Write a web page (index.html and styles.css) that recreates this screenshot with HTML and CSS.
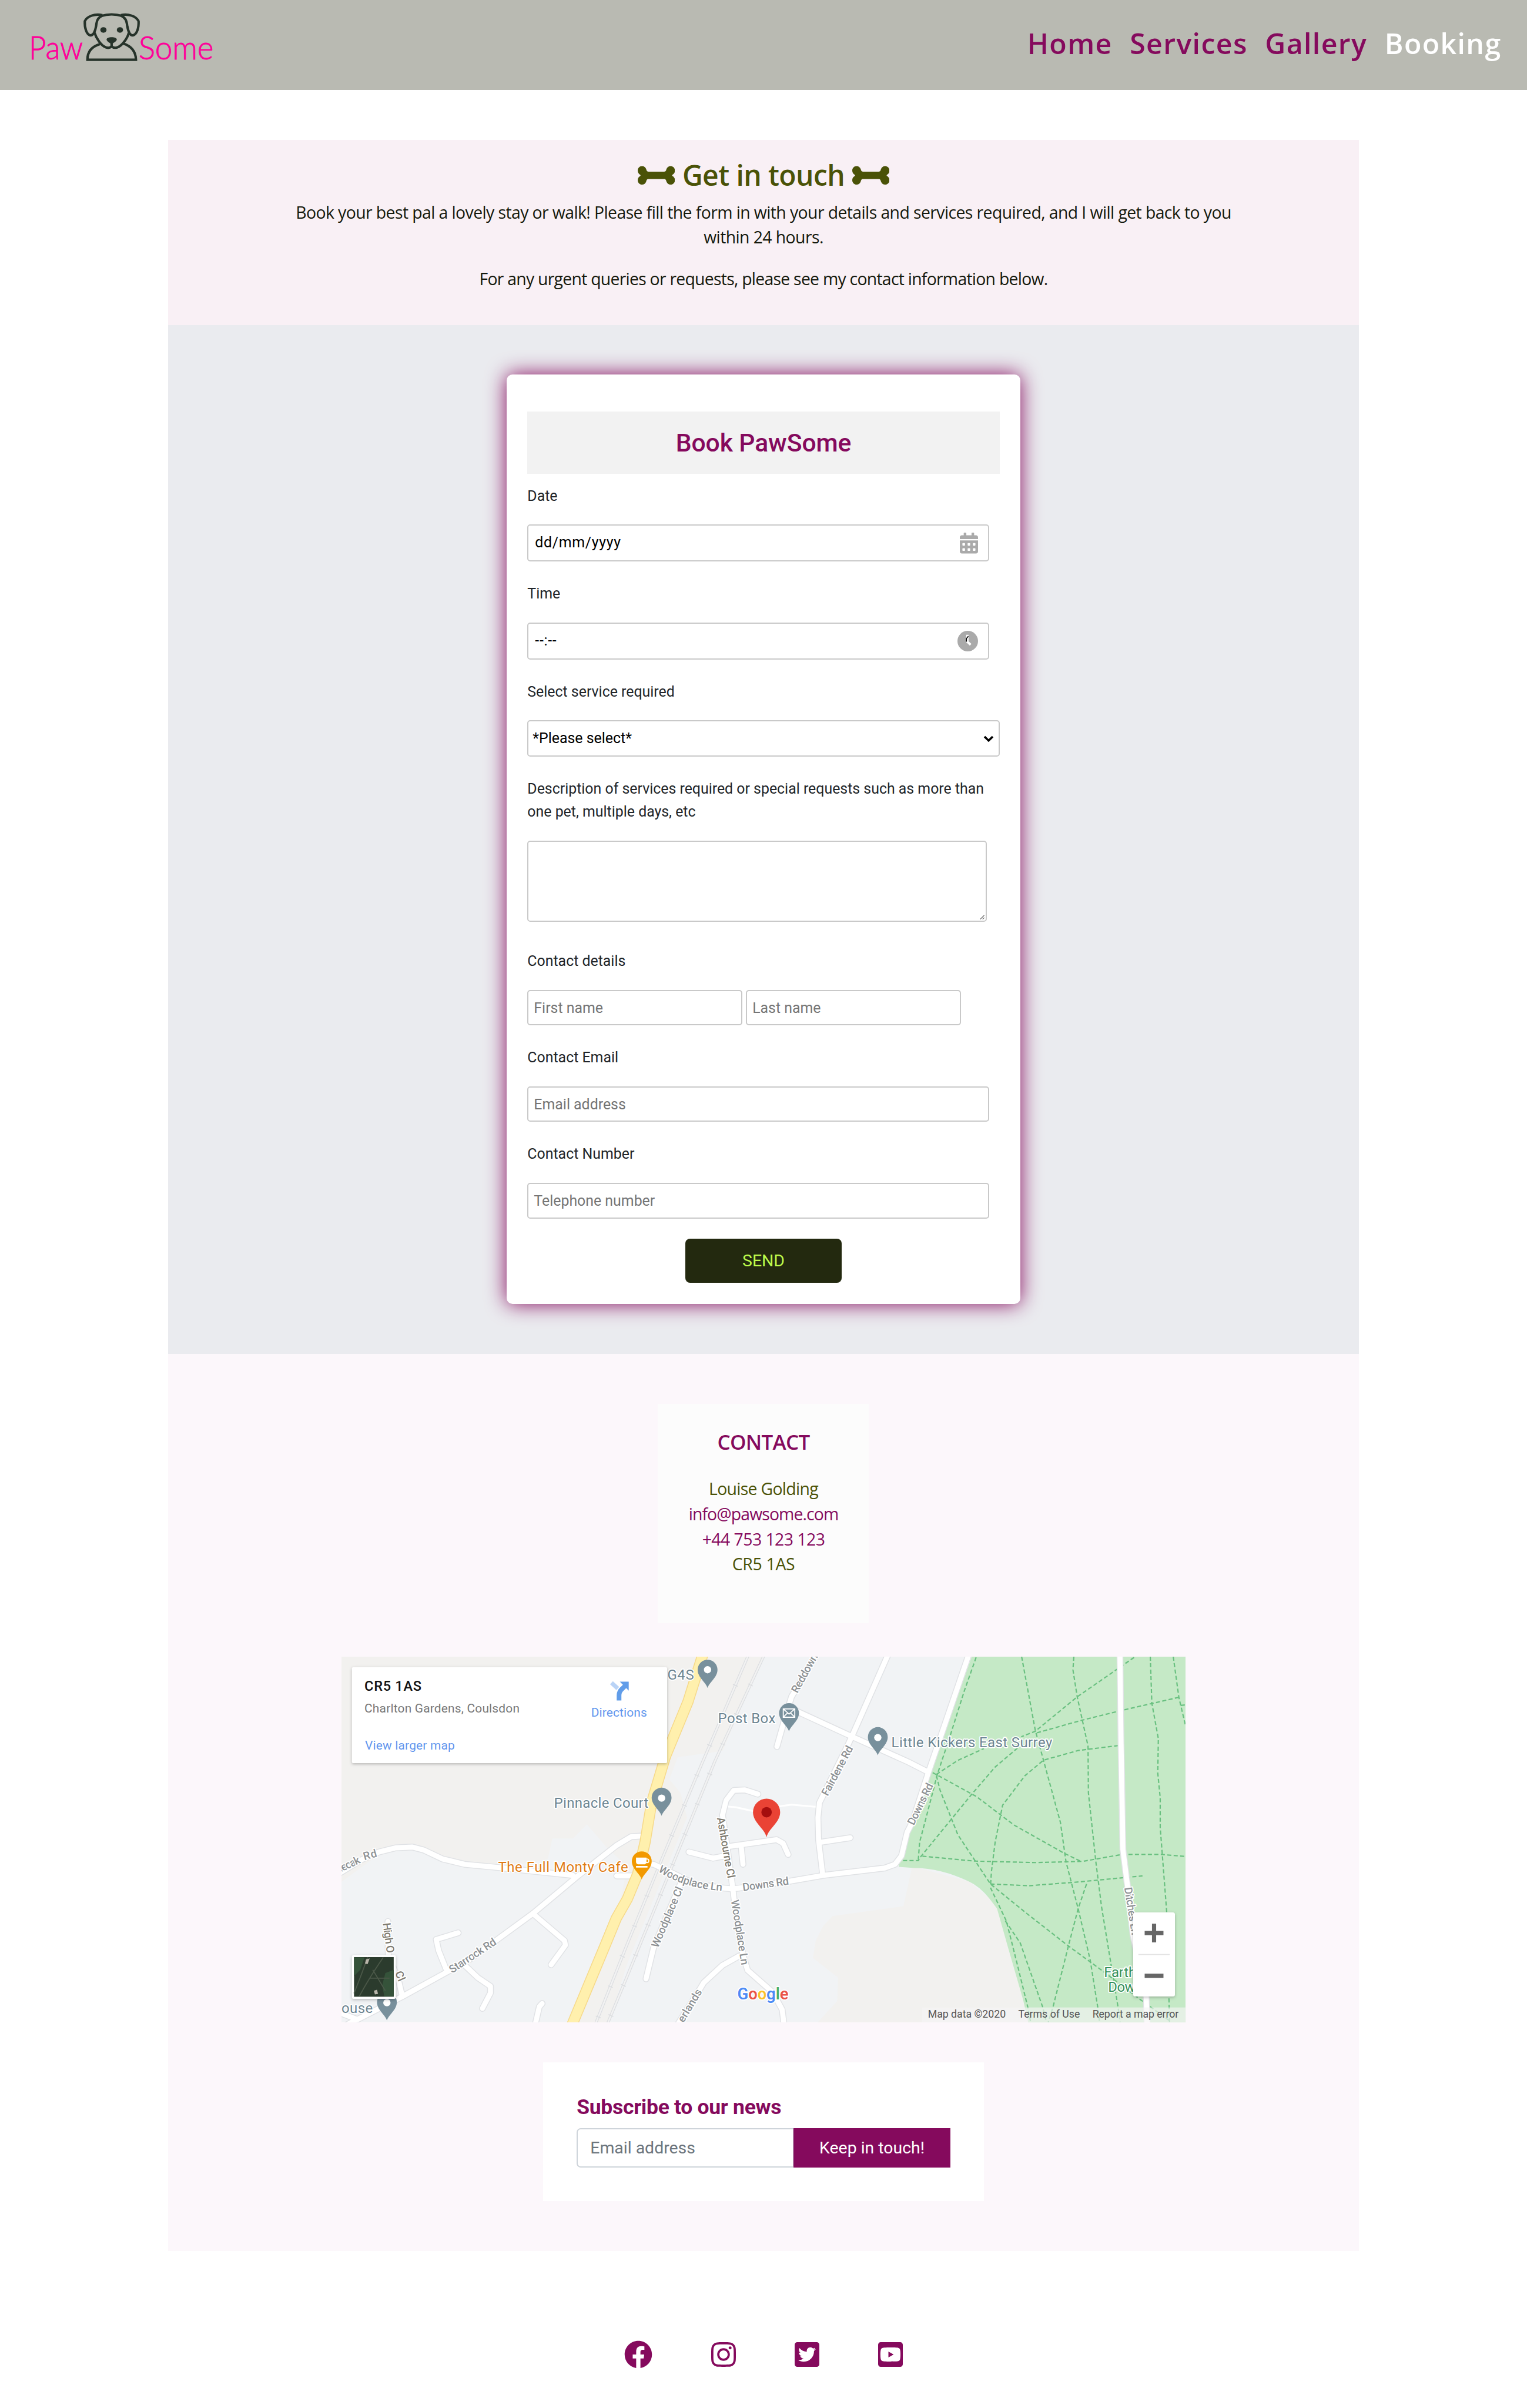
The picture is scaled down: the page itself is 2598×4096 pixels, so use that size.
FILE: index.html
```html
<!DOCTYPE html>
<html lang="en">
<head>
<meta charset="utf-8">
<title>PawSome - Booking</title>
<link rel="stylesheet" href="styles.css">
</head>
<body>
<header class="site-header">
  <svg class="logo" viewBox="0 0 1500 516" role="img" aria-label="PawSome">
    <text class="logo-text" x="165" y="340" textLength="311" lengthAdjust="spacingAndGlyphs">Paw</text>
    <g class="dog-line">
      <path d="M580 92C620 80 662 80 703 92"/>
      <path d="M588 87C545 78 500 92 487 122C485 160 497 198 518 203C535 206 547 180 552 150C556 115 562 103 586 90"/>
      <path d="M694 87C737 78 782 92 796 122C798 160 786 198 764 203C747 206 736 180 731 150C727 115 720 103 696 90"/>
      <path d="M543 188C553 222 582 264 610 273C625 277 636 272 641 266C648 273 660 277 675 272C702 262 732 220 740 188"/>
      <path d="M574 253C530 266 502 296 502 343H781C780 300 756 266 708 250"/>
    </g>
    <g class="dog-solid">
      <ellipse cx="594" cy="172" rx="18" ry="16"/>
      <ellipse cx="689" cy="172" rx="18" ry="16"/>
      <path d="M612 226C614 209 669 209 671 226C670 238 655 243 648 250V268H634V250C627 243 613 238 612 226Z"/>
    </g>
    <text class="logo-text" x="796" y="340" textLength="431" lengthAdjust="spacingAndGlyphs">Some</text>
  </svg>
  <nav class="site-nav">
    <a>Home</a>
    <a>Services</a>
    <a>Gallery</a>
    <a class="active">Booking</a>
  </nav>
</header>

<main class="container">
  <section class="intro">
    <h2 class="intro-title">
      <svg class="bone" viewBox="0 0 640 512"><path d="M598.88 244.56c25.2-12.6 41.12-38.36 41.12-66.53v-7.64C640 129.3 606.7 96 565.61 96c-32.02 0-60.44 20.49-70.57 50.86-7.68 23.03-11.6 45.14-38.11 45.14H183.06c-27.38 0-31.58-25.54-38.11-45.14C134.83 116.49 106.4 96 74.39 96 33.3 96 0 129.3 0 170.39v7.64c0 28.17 15.92 53.93 41.12 66.53 9.43 4.71 9.43 18.17 0 22.88C15.92 280.04 0 305.8 0 333.97v7.64C0 382.7 33.3 416 74.38 416c32.02 0 60.44-20.49 70.57-50.86 7.68-23.03 11.6-45.14 38.11-45.14h273.87c27.38 0 31.58 25.54 38.11 45.14C505.17 395.51 533.6 416 565.61 416c41.08 0 74.38-33.3 74.38-74.39v-7.64c0-28.18-15.92-53.93-41.12-66.53-9.42-4.71-9.42-18.17.01-22.88z"/></svg>
      <span>Get in touch</span>
      <svg class="bone" viewBox="0 0 640 512"><path d="M598.88 244.56c25.2-12.6 41.12-38.36 41.12-66.53v-7.64C640 129.3 606.7 96 565.61 96c-32.02 0-60.44 20.49-70.57 50.86-7.68 23.03-11.6 45.14-38.11 45.14H183.06c-27.38 0-31.58-25.54-38.11-45.14C134.83 116.49 106.4 96 74.39 96 33.3 96 0 129.3 0 170.39v7.64c0 28.17 15.92 53.93 41.12 66.53 9.43 4.71 9.43 18.17 0 22.88C15.92 280.04 0 305.8 0 333.97v7.64C0 382.7 33.3 416 74.38 416c32.02 0 60.44-20.49 70.57-50.86 7.68-23.03 11.6-45.14 38.11-45.14h273.87c27.38 0 31.58 25.54 38.11 45.14C505.17 395.51 533.6 416 565.61 416c41.08 0 74.38-33.3 74.38-74.39v-7.64c0-28.18-15.92-53.93-41.12-66.53-9.42-4.71-9.42-18.17.01-22.88z"/></svg>
    </h2>
    <p class="intro-text">Book your best pal a lovely stay or walk! Please fill the form in with your details and services required, and I will get back to you within 24 hours.</p>
    <p class="intro-text intro-note">For any urgent queries or requests, please see my contact information below.</p>
  </section>

  <section class="booking">
    <form class="booking-card">
      <h3 class="booking-title">Book PawSome</h3>

      <label class="field-label">Date</label>
      <div class="control control-tall">
        <span class="control-value date-value">dd/mm/yyyy</span>
        <svg class="calendar" viewBox="0 0 448 512"><path d="M0 464c0 26.5 21.5 48 48 48h352c26.5 0 48-21.5 48-48V192H0v272zm320-196c0-6.6 5.4-12 12-12h40c6.6 0 12 5.4 12 12v40c0 6.6-5.4 12-12 12h-40c-6.6 0-12-5.4-12-12v-40zm0 128c0-6.6 5.4-12 12-12h40c6.6 0 12 5.4 12 12v40c0 6.6-5.4 12-12 12h-40c-6.6 0-12-5.4-12-12v-40zM192 268c0-6.6 5.4-12 12-12h40c6.6 0 12 5.4 12 12v40c0 6.6-5.4 12-12 12h-40c-6.6 0-12-5.4-12-12v-40zm0 128c0-6.6 5.4-12 12-12h40c6.6 0 12 5.4 12 12v40c0 6.6-5.4 12-12 12h-40c-6.6 0-12-5.4-12-12v-40zM64 268c0-6.6 5.4-12 12-12h40c6.6 0 12 5.4 12 12v40c0 6.6-5.4 12-12 12H76c-6.6 0-12-5.4-12-12v-40zm0 128c0-6.6 5.4-12 12-12h40c6.6 0 12 5.4 12 12v40c0 6.6-5.4 12-12 12H76c-6.6 0-12-5.4-12-12v-40zM400 64h-48V16c0-8.8-7.2-16-16-16h-32c-8.8 0-16 7.2-16 16v48H160V16c0-8.8-7.2-16-16-16h-32c-8.8 0-16 7.2-16 16v48H48C21.5 64 0 85.5 0 112v48h448v-48c0-26.5-21.5-48-48-48z"/></svg>
      </div>

      <label class="field-label">Time</label>
      <div class="control control-tall">
        <span class="control-value date-value">--:--</span>
        <svg class="clock" viewBox="0 0 36 36">
          <circle class="clock-face" cx="18" cy="18" r="18"/>
          <path class="clock-hand" d="M17.4 7V19.2L23 24.4"/>
          <path class="clock-mark" d="M15.800 19V13.500L19 9.500"/>
        </svg>
      </div>

      <label class="field-label">Select service required</label>
      <div class="control control-select">
        <span class="control-value">*Please select*</span>
        <svg class="chevron" viewBox="0 0 18 11"><path d="M2 2L9 8.7L16 2"/></svg>
      </div>

      <label class="field-label">Description of services required or special requests such as more than one pet, multiple days, etc</label>
      <div class="control control-area">
        <svg class="grip" viewBox="0 0 10 10"><path d="M1 9.500L9.500 1M6 9.500L9.500 6"/></svg>
      </div>

      <label class="field-label field-label-far">Contact details</label>
      <div class="name-row">
        <input class="control control-name" placeholder="First name">
        <input class="control control-name" placeholder="Last name">
      </div>

      <label class="field-label">Contact Email</label>
      <input class="control control-short" placeholder="Email address">

      <label class="field-label">Contact Number</label>
      <input class="control control-short" placeholder="Telephone number">

      <button class="send" type="button">SEND</button>
    </form>
  </section>

  <section class="contact">
    <div class="contact-card">
      <h4 class="contact-title">CONTACT</h4>
      <span>Louise Golding</span>
      <a class="contact-link mail">info@pawsome.com</a>
      <a class="contact-link phone">+44 753 123 123</a>
      <span class="postcode">CR5 1AS</span>
    </div>

    <svg class="map" viewBox="0 0 1616 700" preserveAspectRatio="none">
      <defs>
        <path id="pin" d="M0 0C-3 -11 -19 -20 -19 -35A19 19 0 0 1 19 -35C19 -20 3 -11 0 0Z"/>
        <g id="roads" class="roads">
          <g transform="translate(-1512 0)">
            <path d="M20 930L150 870L240 840L330 823L420 820L480 832L580 868L700 890L880 903L1280 935"/>
            <path d="M20 1490L125 1520L370 1425L610 1325L700 1290L830 1220L1065 1090L1310 935L1511 815L1592 778L1650 775"/>
            <path d="M110 1524L60 1545"/>
            <path d="M600 1315L560 1240L547 1195L665 1168"/>
            <path d="M700 1300L770 1350L838 1385L838 1412L795 1475"/>
            <path d="M1065 1090L1235 1200L1240 1218L1163 1298"/>
            <path d="M1078 1540L1100 1468L1115 1455"/>
            <path d="M362 1415L345 1360L290 1260L288 1122"/>
            <path d="M1515 937L1600 937"/>
          </g>
          <path d="M150 885L200 890L300 925L420 970L560 985L625 990L920 960L1110 935L1440 905L1495 890L1530 855L1560 760L1587 720L1677 510L1890 40"/>
          <path d="M760 605L690 588L630 590L590 630L570 690L600 850L625 985L640 1080L680 1260L705 1320L840 1410L890 1480L900 1540"/>
          <path d="M600 818L860 790L895 805L922 850"/>
          <path d="M670 815L680 890"/>
          <path d="M390 840L520 865L590 855"/>
          <path d="M1460 35L1270 360L1240 410L1090 640L1082 700L1085 790L1107 930"/>
          <path d="M1100 800L1255 782"/>
          <path d="M950 262L1260 370L1568 475L1672 515"/>
          <path d="M1080 30L940 210L900 310L862 412"/>
          <path d="M350 960L200 1230L160 1355"/>
          <path d="M660 1262L570 1300L470 1370L430 1420L330 1540"/>
          <path d="M2701 35L2707 400L2717 830L2742 980L2772 1180L2842 1430L2847 1540"/>
        </g>
      </defs>

      <rect class="land" width="1616" height="700"/>
      <g class="map-lines" transform="translate(-14 -22.2) scale(.35714 .47192) translate(1512 0)">
        <path class="land-warm" d="M-1480 40L790 40L570 430L330 455L285 545L345 600L380 700L56 1300L-42 1540L-260 1540L0 1120L60 900L-52 820L-157 728L-232 785L-342 785L-367 870L-632 905L-812 885L-1142 812L-1272 850L-1480 965Z"/>
        <path class="land-warm" d="M1587 900L1622 905L1892 960L2002 1030L2042 1070L2102 1230L2182 1440L2215 1540L1070 1540L1185 1445L1190 1350L1055 1270L1070 1200L1110 1140L1160 1100L1540 1060Z"/>
        <path class="park" d="M1910 40H3060V1540H2212L2182 1440L2102 1230L2042 1070L2002 1030Q1950 980 1892 960Q1740 905 1600 905L1515 900L1530 850L1575 750L1687 510Z"/>
        <g class="rail">
          <path d="M709 40L460 480L250 860L56 1220L-112 1540"/>
          <path d="M794 40L530 470L56 1350L-48 1540"/>
        </g>
        <g class="rail-core">
          <path d="M709 40L460 480L250 860L56 1220L-112 1540"/>
          <path d="M794 40L530 470L56 1350L-48 1540"/>
        </g>
        <g class="rail-ties">
          <path d="M709 40L460 480L250 860L56 1220L-112 1540"/>
          <path d="M794 40L530 470L56 1350L-48 1540"/>
        </g>
        <g class="trails" transform="translate(1512 0)">
          <path d="M418 50L355 185L280 365L210 525L150 700L115 800L108 870"/>
          <path d="M662 47L735 345L780 470L870 720L900 880L965 1070L1030 1280L1070 1470L1080 1530"/>
          <path d="M942 47L937 100L960 210L1018 410L1020 600L1060 880L1090 1060L1140 1290L1180 1475L1190 1530"/>
          <path d="M1265 50L960 210L735 350L660 372"/>
          <path d="M1505 212L1200 265L985 305L735 358"/>
          <path d="M1180 408L965 428L780 467L680 530L560 650L520 800L500 920L495 980"/>
          <path d="M205 525L320 468L460 420"/>
          <path d="M640 418L520 495L395 605L120 860L108 875L20 875"/>
          <path d="M185 518L215 530L420 615L620 730L890 845L985 880"/>
          <path d="M205 530L225 590L320 770L495 970L690 1090L910 1220L1100 1325L1300 1440L1455 1525"/>
          <path d="M130 857L410 877L740 883L990 878L1200 850L1410 850L1540 858"/>
          <path d="M495 970L700 977L960 962L1310 937"/>
          <path d="M1010 970L965 1070L915 1215L830 1470L805 1530"/>
          <path d="M495 985L580 1120L640 1300L695 1470L710 1530"/>
          <path d="M575 1120L655 1210L775 1470L795 1530"/>
          <path d="M1352 47L1360 235L1395 380L1392 520L1405 620L1405 740L1440 1085L1455 1530"/>
          <path d="M1475 47L1505 212L1540 325"/>
          <path d="M1515 245L1540 243"/>
        </g>
        <path class="track" d="M590 655L640 658L740 675M870 655L940 648L1075 657"/>
        <use class="road-edge" href="#roads"/>
        <use class="road-fill" href="#roads"/>
        <path class="main-edge" d="M466 35L385 230L265 450L190 640L155 800L115 930L60 1030L0 1110L-57 1215L-236 1540"/>
        <path class="main-fill" d="M466 35L385 230L265 450L190 640L155 800L115 930L60 1030L0 1110L-57 1215L-236 1540"/>
      </g>

      <path id="woodplace" class="guide" d="M606 411Q655 444 732 449"/>
      <g class="street">
        <text transform="translate(-6 415) rotate(-25)" textLength="48">neoak</text>
        <text transform="translate(44 390) rotate(-16)" textLength="26">Rd</text>
        <text transform="translate(212 607) rotate(-33.5)" textLength="103">Starrock Rd</text>
        <text class="dark" transform="translate(79 511) rotate(82)" textLength="58">High O</text>
        <text class="dark" transform="translate(102 606) rotate(66)">Cl</text>
        <text transform="translate(873 71) rotate(-61)" textLength="82">Reddown</text>
        <text transform="translate(931 268) rotate(-62)" textLength="105">Fairdene Rd</text>
        <text transform="translate(1096 324) rotate(-64)" textLength="86">Downs Rd</text>
        <text transform="translate(769 449) rotate(-8)" textLength="89">Downs Rd</text>
        <text><textPath href="#woodplace" textLength="130">Woodplace Ln</textPath></text>
        <text class="dark" transform="translate(719 309) rotate(80)" textLength="118">Ashbourne Cl</text>
        <text transform="translate(746 467) rotate(81)" textLength="126">Woodplace Ln</text>
        <text transform="translate(606 559) rotate(-67)" textLength="124">Woodplace Cl</text>
        <text transform="translate(655 702) rotate(-59)" textLength="70">erlands</text>
        <text transform="translate(1499 443) rotate(81)" textLength="92">Ditches Ln</text>
      </g>

      <g class="pin">
        <use href="#pin" x="701" y="60"/><circle cx="701" cy="25" r="7"/>
        <use href="#pin" x="857" y="143"/>
        <use href="#pin" x="1027" y="189"/><circle cx="1027" cy="155" r="7"/>
        <use href="#pin" x="613" y="305"/><circle cx="613" cy="271" r="7"/>
        <use href="#pin" x="87" y="697"/><circle cx="87" cy="663" r="7"/>
      </g>
      <path class="envelope" d="M846 100H868V116H846ZM846 100L857 110L868 100M846 116L854 108M868 116L860 108"/>
      <use class="pin-food" href="#pin" x="575" y="427"/>
      <path class="cup" d="M564 385H584V393Q584 398 578 398H570Q564 398 564 393ZM564 401H586V404H564Z"/>
      <circle class="cup-handle" cx="585" cy="391" r="3.500"/>
      <g transform="translate(814 346)">
        <path class="pin-main" d="M0 0C-4 -17 -26 -28 -26 -48A26 26 0 0 1 26 -48C26 -28 4 -17 0 0Z"/>
        <circle class="pin-main-dot" cy="-48" r="10"/>
      </g>

      <g class="place">
        <text x="624" y="44" textLength="51">G4S</text>
        <text x="721" y="127.500" textLength="110">Post Box</text>
        <text x="1053" y="173.500" textLength="308">Little Kickers East Surrey</text>
        <text x="407" y="289.500" textLength="181">Pinnacle Court</text>
        <text class="food" x="300" y="412" textLength="249">The Full Monty Cafe</text>
        <text x="0" y="682" textLength="60">ouse</text>
        <text class="green" x="1460" y="614" textLength="62">Farth</text>
        <text class="green" x="1468" y="642.500" textLength="52">Dow</text>
      </g>

      <text class="google" x="758" y="656.500" textLength="98"><tspan class="g-blue">G</tspan><tspan class="g-red">o</tspan><tspan class="g-yellow">o</tspan><tspan class="g-blue">g</tspan><tspan class="g-green">l</tspan><tspan class="g-red">e</tspan></text>

      <rect class="credit-bar" x="1112" y="672" width="504" height="28"/>
      <g class="credit">
        <text x="1123" y="691.500" textLength="149">Map data ©2020</text>
        <text x="1296" y="691.500" textLength="118">Terms of Use</text>
        <text x="1438" y="691.500" textLength="165">Report a map error</text>
      </g>

      <rect class="panel" x="20" y="20" width="603.500" height="184" rx="3"/>
      <text class="panel-title" x="44" y="65" textLength="109">CR5 1AS</text>
      <text class="panel-sub" x="44" y="107.500" textLength="297">Charlton Gardens, Coulsdon</text>
      <text class="panel-link" x="45" y="177.500" textLength="172">View larger map</text>
      <text class="panel-link" x="478" y="115" textLength="107">Directions</text>
      <path class="turn-light" d="M517 50L529 61"/>
      <path class="turn" d="M531.500 84V74Q531.500 67 537 62L543 56"/>
      <path class="turn-head" d="M533 48H550V65Z"/>

      <g>
        <rect class="panel" x="20" y="572" width="84" height="83.500" rx="3"/>
        <rect class="sat" x="24" y="575.500" width="76" height="76"/>
        <path class="sat-lit" d="M24 576H44L36 600L24 612ZM84 606L100 600V651H82L78 630Z"/>
        <path class="sat-path" d="M24 645Q40 605 50 576M34 651Q50 620 80 576M54 616H92M60 600L84 640"/>
        <path class="sat-roof" d="M47 580L54 578L50 589L45 588ZM62 640L68 638L70 646L64 647Z"/>
      </g>

      <rect class="panel" x="1516" y="490" width="80" height="161" rx="4"/>
      <path class="zoom-line" d="M1526 570.500H1586"/>
      <path class="zoom-sign" d="M1538 529.500H1574M1556 511.500V547.500M1538 611.500H1574"/>
    </svg>

    <div class="subscribe">
      <h5 class="subscribe-title">Subscribe to our news</h5>
      <div class="subscribe-row">
        <input class="subscribe-input" placeholder="Email address">
        <button class="subscribe-button" type="button">Keep in touch!</button>
      </div>
    </div>
  </section>
</main>

<footer class="socials">
  <svg class="round" viewBox="0 0 512 512"><path d="M504 256C504 119 393 8 256 8S8 119 8 256c0 123.780 90.690 226.380 209.250 245V327.690h-63V256h63v-54.640c0-62.150 37-96.480 93.670-96.480 27.140 0 55.520 4.840 55.520 4.840v61h-31.280c-30.800 0-40.410 19.120-40.410 38.730V256h68.780l-11 71.690h-57.780V501C413.310 482.380 504 379.780 504 256z"/></svg>
  <svg viewBox="0 0 448 512"><path d="M224.100 141c-63.600 0-114.900 51.300-114.900 114.900s51.300 114.900 114.900 114.900S339 319.500 339 255.900 287.700 141 224.100 141zm0 189.600c-41.100 0-74.700-33.500-74.700-74.700s33.500-74.700 74.700-74.700 74.700 33.500 74.700 74.700-33.600 74.700-74.700 74.700zm146.400-194.300c0 14.900-12 26.800-26.800 26.800-14.900 0-26.800-12-26.800-26.800s12-26.800 26.800-26.800 26.800 12 26.800 26.800zm76.100 27.200c-1.700-35.900-9.900-67.700-36.200-93.900-26.200-26.200-58-34.400-93.900-36.200-37-2.100-147.900-2.100-184.900 0-35.800 1.700-67.600 9.900-93.900 36.100s-34.400 58-36.200 93.900c-2.100 37-2.100 147.900 0 184.900 1.700 35.900 9.900 67.700 36.200 93.900s58 34.400 93.900 36.200c37 2.100 147.900 2.100 184.900 0 35.900-1.700 67.700-9.900 93.900-36.200 26.200-26.200 34.400-58 36.200-93.900 2.100-37 2.100-147.800 0-184.800zM398.800 388c-7.800 19.600-22.900 34.700-42.600 42.600-29.500 11.700-99.500 9-132.100 9s-102.700 2.600-132.100-9c-19.600-7.800-34.700-22.900-42.600-42.600-11.700-29.500-9-99.500-9-132.100s-2.600-102.700 9-132.100c7.800-19.600 22.900-34.700 42.600-42.600 29.500-11.700 99.500-9 132.100-9s102.700-2.600 132.100 9c19.600 7.800 34.700 22.900 42.600 42.600 11.700 29.500 9 99.500 9 132.100s2.700 102.700-9 132.100z"/></svg>
  <svg viewBox="0 0 448 512"><path d="M400 32H48C21.500 32 0 53.500 0 80v352c0 26.500 21.500 48 48 48h352c26.500 0 48-21.500 48-48V80c0-26.500-21.500-48-48-48zm-48.900 158.800c.2 2.800.2 5.700.2 8.500 0 86.700-66 186.600-186.600 186.600-37.200 0-71.700-10.800-100.700-29.400 5.300.6 10.400.8 15.800.8 30.700 0 58.900-10.400 81.400-28-28.800-.6-53-19.500-61.300-45.500 10.100 1.500 19.200 1.500 29.600-1.200-30-6.100-52.500-32.500-52.500-64.400v-.8c8.700 4.900 18.900 7.900 29.600 8.300a65.447 65.447 0 0 1-29.200-54.600c0-12.200 3.200-23.400 8.900-33.100 32.300 39.800 80.800 65.800 135.200 68.600-9.300-44.500 24-80.600 64-80.600 18.900 0 35.900 7.900 47.900 20.700 14.800-2.800 29-8.300 41.600-15.800-4.900 15.200-15.200 28-28.800 36.100 13.200-1.400 26-5.100 37.800-10.200-8.900 13.100-20.100 24.700-32.900 34z"/></svg>
  <svg viewBox="0 0 448 512"><path d="M186.800 202.100l95.200 54.100-95.200 54.100V202.100zM448 80v352c0 26.500-21.500 48-48 48H48c-26.500 0-48-21.500-48-48V80c0-26.500 21.500-48 48-48h352c26.500 0 48 21.500 48 48zm-42 176.300s0-59.600-7.600-88.200c-4.200-15.800-16.500-28.200-32.200-32.400C337.900 128 224 128 224 128s-113.900 0-142.200 7.700c-15.700 4.200-28 16.600-32.200 32.400-7.600 28.500-7.600 88.200-7.600 88.200s0 59.600 7.600 88.200c4.200 15.800 16.500 27.700 32.200 31.900C110.100 384 224 384 224 384s113.900 0 142.200-7.700c15.700-4.200 28-16.100 32.200-31.900 7.600-28.500 7.600-88.100 7.600-88.100z"/></svg>
</footer>
</body>
</html>
```
FILE: styles.css
```css
:root {
  --plum: #850a5d;
  --olive: #4a5207;
  --humanist: "Open Sans", "Noto Sans", sans-serif;
  --grotesk: Roboto, "Liberation Sans", sans-serif;
}

* { box-sizing: border-box; }

body {
  margin: 0;
  background: #fff;
  font-family: var(--humanist);
  font-size: 28.4px;
  line-height: 42.65px;
}

h2, h3, h4, h5, p { margin: 0; }

/* Header */
.site-header {
  display: flex;
  justify-content: space-between;
  height: 152.8px;
  padding-right: 43.500px;
  background: #b9bab2;
}
.logo { width: 444.3px; height: 152.8px; }
.logo-text {
  fill: #ff0099;
  font-family: Lato, sans-serif;
  font-size: 184px;
  font-weight: 300;
  stroke: #ff0099;
  stroke-width: 3;
}
.dog-line { fill: none; stroke: #26332a; stroke-width: 14; }
.dog-solid { fill: #26332a; }
.site-nav {
  display: flex;
  gap: 29.500px;
  padding-top: 38px;
  color: var(--plum);
  font-size: 48.2px;
  font-weight: 600;
  line-height: 70px;
  letter-spacing: 1.4px;
}
.active { color: #fff; }

/* Page column */
.container {
  width: 2025.8px;
  margin: 85.3px auto 0;
}

.intro {
  display: flex;
  flex-direction: column;
  align-items: center;
  height: 314.600px;
  padding-top: 31.200px;
  background: #f9f0f5;
  text-align: center;
}
.intro-title {
  display: flex;
  align-items: center;
  gap: 13px;
  margin-bottom: 12.400px;
  color: var(--olive);
  font-size: 48px;
  font-weight: 600;
  line-height: 58px;
  letter-spacing: -.6px;
}
.bone { width: 63.300px; height: 50.600px; fill: var(--olive); }
.intro-text {
  width: 1650px;
  margin-bottom: 28.400px;
  color: #14180c;
  letter-spacing: -.59px;
}
.intro-note { letter-spacing: -.740px; }

/* Booking form */
.booking {
  display: flex;
  justify-content: center;
  align-items: flex-start;
  height: 1750.300px;
  padding-top: 84.800px;
  background: #eaebef;
}
.booking-card {
  display: flex;
  flex-direction: column;
  align-items: flex-start;
  width: 874.300px;
  height: 1580.400px;
  padding: 62.600px 35.500px 35.500px;
  border-radius: 10px;
  background: #fff;
  box-shadow: 0 0 35.500px var(--plum);
  color: #212529;
  font-family: var(--grotesk);
  font-size: 24.880px;
}
.booking-title {
  width: 100%;
  margin-bottom: -17.500px;
  background: #f2f2f2;
  color: var(--plum);
  font-size: 42.650px;
  font-weight: 500;
  line-height: 106.200px;
  text-align: center;
  letter-spacing: -.100px;
}
.field-label {
  margin: 35px 0 29.300px;
  line-height: 39.100px;
}
.field-label-far { margin-top: 47.300px; }
.control {
  display: flex;
  align-items: center;
  justify-content: space-between;
  width: 785.500px;
  padding: 0 17px 0 9px;
  border: 2px solid #c9c9c9;
  border-radius: 5px;
  background: #fff;
  color: #000;
  font-family: inherit;
  font-size: inherit;
}
.control::placeholder { color: #757575; opacity: 1; }
.control-tall { height: 63.200px; padding-left: 11px; }
.date-value { letter-spacing: .700px; }
.control-select { width: 803.300px; height: 62px; padding: 0 8px 0 7px; }
.control-area {
  align-items: flex-end;
  justify-content: flex-end;
  width: 781.500px;
  height: 138.200px;
  padding: 0 2px 2px;
}
.control-short, .control-name { height: 60.700px; }
.control-name { width: 366px; }
.name-row { display: flex; gap: 5.800px; }
.calendar { width: 31px; height: 35.500px; fill: #aaa; }
.clock { width: 35px; height: 35px; }
.clock-face { fill: #aaa; }
.clock-mark { fill: none; stroke: #000; stroke-width: 1.600; }
.clock-hand { fill: none; stroke: #fff; stroke-width: 4; }
.chevron { width: 18px; height: 11px; fill: none; stroke: #000; stroke-width: 3.600; }
.grip { width: 8px; height: 8px; fill: none; stroke: #555; stroke-width: 1.500; }
.send {
  align-self: center;
  width: 266.600px;
  height: 75px;
  margin-top: 34.700px;
  border: 0;
  border-radius: 8px;
  background: #23290f;
  color: #bdfb4b;
  font-family: inherit;
  font-size: 28.430px;
}

/* Contact, map and newsletter */
.contact {
  display: flex;
  flex-direction: column;
  align-items: center;
  height: 1526.500px;
  padding-top: 85.400px;
  background: #fcf7fb;
}
.contact-card {
  display: flex;
  flex-direction: column;
  align-items: center;
  width: 359px;
  height: 372.900px;
  padding-top: 43.600px;
  background: #fcfcfc;
  color: var(--olive);
  letter-spacing: -.700px;
}
.contact-title {
  margin-bottom: 37.400px;
  color: var(--plum);
  font-size: 35px;
  font-weight: 600;
  line-height: 42px;
}
.contact-link { color: var(--plum); }
.mail { letter-spacing: -.900px; }
.phone { letter-spacing: -.550px; }
.postcode { letter-spacing: -.300px; }
.map {
  width: 1435.800px;
  height: 621.500px;
  margin-top: 57.200px;
  overflow: hidden;
  font-family: var(--grotesk);
}
.land { fill: #f1f3f5; }
.land-warm { fill: #f2f1ef; }
.park { fill: #c5e9c6; }
.map-lines path, .roads path {
  vector-effect: non-scaling-stroke;
  stroke-linejoin: round;
}
.map-lines use, .rail, .rail-core, .rail-ties, .trails, .track, .main-edge, .main-fill, .guide { fill: none; }
.rail { stroke: #dcdee1; stroke-width: 5; }
.rail-core { stroke: #f2f2f2; stroke-width: 2.500; }
.rail-ties { stroke: #dcdee1; stroke-width: 9; stroke-dasharray: 1.500 54; }
.trails { stroke: #69c080; stroke-width: 2.200; stroke-dasharray: 7 4; }
.track { stroke: #fff; stroke-width: 3; }
.road-edge { stroke: #e0e2e5; stroke-width: 11.500; stroke-linecap: round; }
.road-fill { stroke: #fff; stroke-width: 8.600; stroke-linecap: round; }
.main-edge { stroke: #f6d98a; stroke-width: 19; }
.main-fill { stroke: #fff0ad; stroke-width: 16; }

.street text, .place text, .google {
  paint-order: stroke;
  stroke: #fff;
  stroke-width: 4;
  stroke-linejoin: round;
}
.street { fill: #8d9194; font-size: 21px; font-weight: 500; }
.street .dark { fill: #7f7b70; }
.place { fill: #6c8592; font-size: 27px; }
.place .food { fill: #e07c14; }
.place .green { fill: #35915a; }
.pin { fill: #78909c; }
.pin circle { fill: #fff; }
.envelope { fill: none; stroke: #fff; stroke-width: 2; }
.pin-food { fill: #f29900; }
.cup { fill: #fff; }
.cup-handle { fill: none; stroke: #fff; stroke-width: 2; }
.pin-main { fill: #ea4335; }
.pin-main-dot { fill: #a50e0e; }
.google { font-size: 31px; font-weight: 600; }
.g-blue { fill: #4c8bf5; }
.g-red { fill: #ea5547; }
.g-yellow { fill: #fbc22d; }
.g-green { fill: #4bb066; }
.credit-bar { fill: #f5f5f5; fill-opacity: .65; }
.credit { fill: #555; font-size: 20px; }
.panel { fill: #fff; filter: drop-shadow(0 2px 3px rgba(0, 0, 0, .25)); }
.panel-title { fill: #111; font-size: 26.500px; font-weight: 500; }
.panel-sub { fill: #777; font-size: 23.500px; }
.panel-link { fill: #6196ee; font-size: 23.500px; }
.turn-light { fill: none; stroke: #b9d3f6; stroke-width: 8; }
.turn { fill: none; stroke: #619de9; stroke-width: 9; }
.turn-head { fill: #619de9; }
.sat { fill: #2b3b2d; }
.sat-lit { fill: #35533a; }
.sat-path { fill: none; stroke: #4b5848; stroke-width: 2; }
.sat-roof { fill: #b9b5aa; }
.zoom-line { stroke: #e3e3e3; stroke-width: 2; }
.zoom-sign { stroke: #666; stroke-width: 8; }

.subscribe {
  width: 749.900px;
  height: 236.400px;
  margin-top: 67.800px;
  padding: 54.800px 57.200px 0;
  background: #fff;
  font-family: var(--grotesk);
}
.subscribe-title {
  margin-bottom: 14.600px;
  color: var(--plum);
  font-size: 35.500px;
  font-weight: 700;
  line-height: 42.600px;
  letter-spacing: -.300px;
}
.subscribe-row { display: flex; height: 67.500px; }
.subscribe-input {
  width: 369.200px;
  padding: 0 21px;
  border: 2px solid #ced4da;
  border-right-width: 1px;
  border-radius: 7px 0 0 7px;
  font-family: inherit;
  font-size: 28.430px;
}
.subscribe-input::placeholder { color: #6c757d; opacity: 1; }
.subscribe-button {
  width: 266.600px;
  border: 0;
  background: var(--plum);
  color: #fff;
  font-family: inherit;
  font-size: 28.430px;
}

/* Footer */
.socials {
  display: flex;
  justify-content: center;
  gap: 99.700px;
  margin-top: 151.500px;
  padding-bottom: 60px;
}
.socials svg { width: 42px; height: 48px; fill: var(--plum); }
.socials .round { width: 48px; }
```
